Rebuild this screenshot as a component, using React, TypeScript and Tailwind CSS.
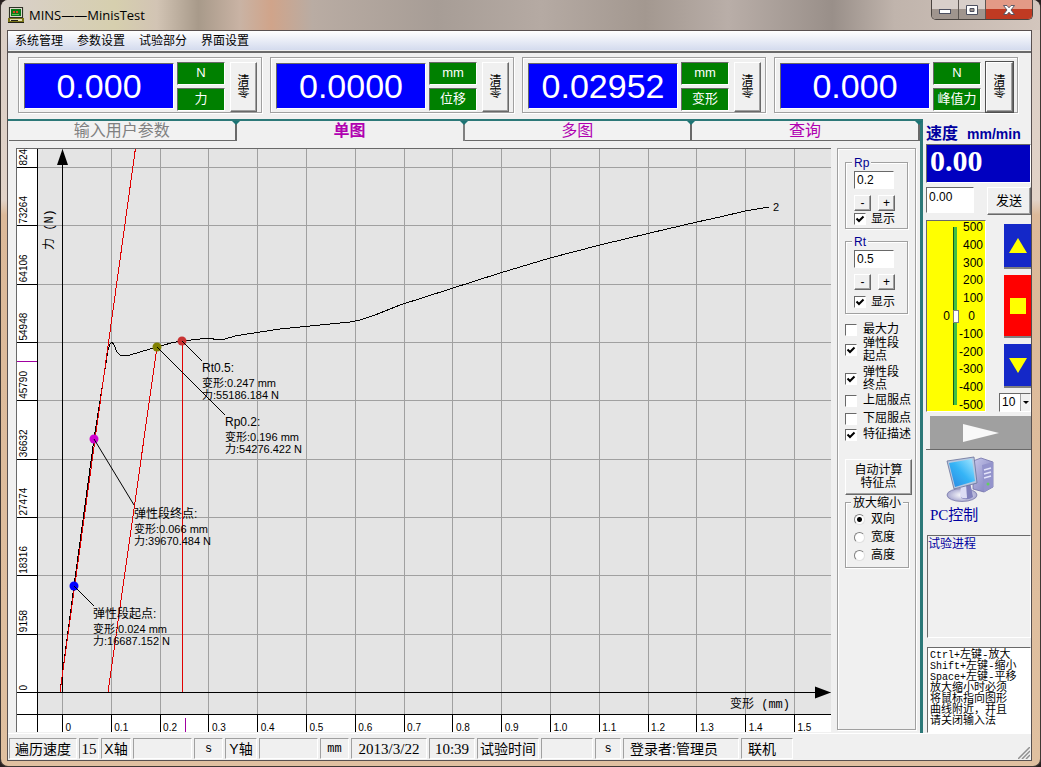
import React from "react";

const raised =
  "border border-t-white border-l-white border-r-[#696969] border-b-[#696969] bg-[#f0f0f0] shadow-[inset_-1px_-1px_0_#a0a0a0]";
const sunken = "border border-t-[#696969] border-l-[#696969] border-r-white border-b-white";

const menus = ["系统管理", "参数设置", "试验部分", "界面设置"];

const meters = [
  { value: "0.000", unit: "N", name: "力" },
  { value: "0.0000", unit: "mm", name: "位移" },
  { value: "0.02952", unit: "mm", name: "变形" },
  { value: "0.000", unit: "N", name: "峰值力" },
];

function TitleBar() {
  return (
    <header className="-mr-2 flex h-[30px] items-start justify-between bg-[linear-gradient(90deg,#d9d0cb_0%,#d6cfae_11%,#d2c4b4_15%,#a89a8a_19%,#c9b3a4_23%,#d0a48a_26%,#b9aca3_30%,#a79d96_42%,#b5aaa3_52%,#a39890_62%,#b9aea8_70%,#998f89_80%,#c0b4ac_86%,#d3c6bd_100%)] pr-[7px] pl-[7px]">
      <div className="flex items-center gap-[5px] pt-[7px]">
        <svg viewBox="0 0 16 16" className="h-4 w-4" aria-hidden="true" shapeRendering="crispEdges">
          <rect x="0" y="0" width="16" height="16" fill="#7a7418" />
          <rect x="0" y="0" width="16" height="11" fill="#c8c8b8" />
          <rect x="1" y="0" width="14" height="11" fill="#303028" />
          <rect x="2" y="1" width="12" height="9" fill="#d8d8c8" />
          <rect x="3" y="2" width="10" height="7" fill="#0a7818" />
          <rect x="5" y="4" width="2" height="2" fill="#e04020" />
          <rect x="8" y="4" width="2" height="2" fill="#e04020" />
          <rect x="4" y="7" width="7" height="1" fill="#60c050" />
          <rect x="2" y="12" width="12" height="2" fill="#e0dcb0" />
          <rect x="3" y="13" width="7" height="1" fill="#202018" />
          <rect x="0" y="15" width="16" height="1" fill="#202018" />
        </svg>
        <h1 className="font-['Open_Sans','Noto_Sans_CJK_SC',sans-serif] text-[13px] leading-4 text-black">MINS——MinisTest</h1>
      </div>
      <div className="flex h-5 overflow-hidden rounded-b-[5px] border border-t-0 border-[#4a4440]">
        <button aria-label="最小化" className="flex w-[27px] items-center justify-center border-r border-[#5d5652] bg-linear-to-b from-[#d8cfca] from-45% to-[#a0958e] to-50%">
          <svg viewBox="0 0 12 6" className="mt-1 h-[6px] w-3"><rect x="0.5" y="0.5" width="11" height="4" fill="#fff" stroke="#4d5060" /></svg>
        </button>
        <button aria-label="最大化" className="flex w-[27px] items-center justify-center border-r border-[#5d5652] bg-linear-to-b from-[#d8cfca] from-45% to-[#a0958e] to-50%">
          <svg viewBox="0 0 12 10" className="h-[10px] w-3"><path d="M.5 .5h11v9h-11z M4 3.5h4v3h-4z" fill="#fff" fillRule="evenodd" stroke="#4d5060" /></svg>
        </button>
        <button aria-label="关闭" className="flex w-[46px] items-center justify-center bg-linear-to-b from-[#e39a86] from-45% to-[#c03a22] to-50%">
          <svg viewBox="0 0 12 10" className="h-[10px] w-3"><path d="M.5 .5h3.5L6 2.8 8 .5h3.5L8 5l3.5 4.5H8L6 7.2 4 9.5H.5L4 5z" fill="#fff" stroke="#4d5060" strokeWidth=".9" /></svg>
        </button>
      </div>
    </header>
  );
}

function Meter({ value, unit, name, focused }: { value: string; unit: string; name: string; focused: boolean }) {
  return (
    <section className="flex h-14 w-[244px] gap-[3px] border border-[#a0a0a0] pt-[4px] pl-[5px] shadow-[inset_1px_1px_0_#fff,1px_1px_0_#fff]">
      <output className={`mt-[1px] flex h-[46px] w-[150px] items-center justify-center bg-[#0000ff] text-[34px] leading-none text-white ${sunken}`}>{value}</output>
      <div className="flex w-12 flex-col gap-[3px] text-center text-[13px] leading-[19px] text-white">
        <span className={`h-[23px] bg-[#008000] ${sunken}`}>{unit}</span>
        <span className={`h-[23px] bg-[#008000] ${sunken}`}>{name}</span>
      </div>
      <button className={`ml-[2px] flex h-[50px] w-[27px] flex-col items-center justify-center text-xs leading-3 ${raised} ${focused ? "outline outline-[#505050]" : ""}`}>
        <span className="w-3">清零</span>
      </button>
    </section>
  );
}

const tabs = ["输入用户参数", "单图", "多图", "查询"];

function TabStrip() {
  return (
    <nav className="flex h-5" role="tablist">
      {tabs.map((t, i) => {
        const active = i === 1;
        return (
          <button
            key={t}
            role="tab"
            aria-selected={active}
            className={`relative flex-1 text-base leading-[18px] ${i === 0 ? "text-[#808080]" : "text-[#b000b0]"} ${
              active ? "border-r-2 border-[#808080] font-bold" : "border-r-2 border-b border-[#696969] bg-[#f2f2f2]"
            }`}
          >
            {t}
            <svg viewBox="0 0 8 4" className="absolute top-0 -right-[5px] z-10 h-1 w-2" aria-hidden="true"><path d="M0 0h8L4 4z" fill="#1c7474" /></svg>
          </button>
        );
      })}
    </nav>
  );
}

const xOf = (v: number) => 46.5 + v * 488;
const yOf = (n: number) => 544.5 - n * 58.33;
const xTicks = Array.from({ length: 16 }, (_, i) => i / 10);
const yTicks = Array.from({ length: 10 }, (_, i) => i);

const curve =
  "44,544 58,438 78,291 92,202 94,196 96,194 98,197 101,204 104,207 109,208 114,207 124,204 141,199 155,195 166,193 184,191 194,190 201,192 209,191 219,188 244,184 264,181 294,178 334,174 344,172 359,167 384,157 434,141 484,125 534,110 584,97 634,85 681,74 704,69 729,63 753,59";

const marks = [
  { x: 166, y: 193, tx: 186, ty: 224, lx: 186, ly: 213, color: "#c83232", title: "Rt0.5:", d: "0.247", f: "55186.184" },
  { x: 141, y: 199, tx: 209, ty: 278, lx: 209, ly: 267, color: "#808000", title: "Rp0.2:", d: "0.196", f: "54276.422" },
  { x: 78, y: 291, tx: 118, ty: 370, lx: 118, ly: 357, color: "#d000d0", title: "弹性段终点:", d: "0.066", f: "39670.484" },
  { x: 58, y: 438, tx: 77, ty: 470, lx: 78, ly: 458, color: "#0000ff", title: "弹性段起点:", d: "0.024", f: "16687.152" },
];

function Chart() {
  return (
    <svg viewBox="0 0 815 584" role="img" aria-label="力-变形曲线" className="block h-auto w-full">
      <rect width="815" height="584" fill="#e4e4e4" />
      <rect width="21" height="584" fill="#fff" />
      <rect y="567" width="815" height="17" fill="#fff" />
      <g shapeRendering="crispEdges" fill="none">
        {xTicks.map((v) => (
          <g key={v}>
            <path d={`M${xOf(v)} 0V566`} stroke="#a0a0a0" />
            <path d={`M${xOf(v)} 566V584`} stroke="#000" />
          </g>
        ))}
        {yTicks.map((n) => (
          <g key={n}>
            <path d={`M22 ${yOf(n)}H815`} stroke="#a0a0a0" />
            <path d={`M0 ${yOf(n)}H22`} stroke="#000" />
          </g>
        ))}
        <path d="M21.5 0V584 M0 566.5H815 M46.5 6V544 M0 544.5H805" stroke="#000" />
        <path d="M1 213.5H21 M169.5 570V584" stroke="#a000a0" />
        <polyline points={curve} stroke="#000" />
        <path d="M44 544L119.5 0 M92 544L141 199 M166.5 193V544" stroke="#e00000" />
        <path d="M0 .5H815 M.5 0V584" stroke="#696969" />
      </g>
      <path d="M46.5 1L52 17H41z M815 544.5L799 538.5V550.5z" />
      <g className="text-[10px]">
        {xTicks.map((v) => (
          <text key={v} x={xOf(v) + 3} y="583">{v === 0 ? "0" : v.toFixed(1)}</text>
        ))}
        {yTicks.map((n) => (
          <text key={n} transform={`translate(11 ${yOf(n) - 2}) rotate(-90)`}>{n * 9158}</text>
        ))}
      </g>
      <g className="font-['Liberation_Mono','Noto_Sans_CJK_SC',monospace] text-xs">
        <text transform="translate(37 102) rotate(-90)">力 (N)</text>
        <text x="714" y="560">变形 (mm)</text>
      </g>
      <text x="757" y="63" className="text-[11px]">2</text>
      {marks.map((m) => (
        <g key={m.title}>
          <circle cx={m.x} cy={m.y} r="4.5" fill={m.color} />
          <path d={`M${m.x} ${m.y}L${m.lx} ${m.ly}`} stroke="#000" strokeWidth="1" />
          <text x={m.tx} y={m.ty} className="text-xs">{m.title}</text>
          <text x={m.tx} y={m.ty + 15} className="text-[11px]">变形:{m.d} mm</text>
          <text x={m.tx} y={m.ty + 27} className="text-[11px]">力:{m.f} N</text>
        </g>
      ))}
    </svg>
  );
}

const boxClass = `h-3 w-3 shrink-0 appearance-none bg-white ${sunken} checked:bg-[url("data:image/svg+xml,%3Csvg%20xmlns='http://www.w3.org/2000/svg'%20viewBox='0%200%2010%2010'%3E%3Cpath%20d='M1.500%204.500L4%207L8.500%202.500'%20fill='none'%20stroke='black'%20stroke-width='2'/%3E%3C/svg%3E")]`;

function OffsetGroup({ name, value, tall }: { name: string; value: string; tall: boolean }) {
  return (
    <fieldset className={`relative mx-[7px] border border-[#a0a0a0] pl-2 shadow-[inset_1px_1px_0_#fff,1px_1px_0_#fff] ${tall ? "h-[73px]" : "h-[67px]"}`}>
      <legend className="absolute -top-2 left-[6px] bg-[#f0f0f0] px-[2px] text-xs leading-4 text-[#000090]">{name}</legend>
      <input aria-label={name} defaultValue={value} className={`mt-2 block h-[18px] w-10 bg-white px-[2px] text-xs ${sunken}`} />
      <div className="mt-[6px] flex gap-[7px]">
        <button aria-label={`${name} 减小`} className={`h-4 w-[17px] text-xs leading-3 ${raised}`}>-</button>
        <button aria-label={`${name} 增大`} className={`h-4 w-[17px] text-xs leading-3 ${raised}`}>+</button>
      </div>
      <label className={`flex items-center gap-[5px] text-xs leading-4 ${tall ? "mt-1" : ""}`}>
        <input type="checkbox" defaultChecked className={boxClass} />
        显示
      </label>
    </fieldset>
  );
}

const options = [
  { label: "最大力", on: false, h: "h-[13px]" },
  { label: "弹性段起点", on: true, h: "h-[27px]" },
  { label: "弹性段终点", on: true, h: "h-[32px]" },
  { label: "上屈服点", on: false, h: "h-[11px]" },
  { label: "下屈服点", on: false, h: "h-[25px]" },
  { label: "特征描述", on: true, h: "h-[7px]" },
];

function OptionPanel() {
  return (
    <aside className="mb-[2px] w-[79px] shrink-0 border border-[#a0a0a0] pt-[13px] shadow-[inset_1px_1px_0_#fff,1px_1px_0_#fff]">
      <OffsetGroup name="Rp" value="0.2" tall={false} />
      <div className="h-3" />
      <OffsetGroup name="Rt" value="0.5" tall />
      <div className="mt-[9px] pl-[7px]">
        {options.map((o) => (
          <label key={o.label} className={`flex items-center gap-[6px] text-xs leading-[13px] ${o.h}`}>
            <input type="checkbox" defaultChecked={o.on} className={boxClass} />
            <span className={o.label.length === 5 ? "w-9" : "whitespace-nowrap"}>{o.label}</span>
          </label>
        ))}
      </div>
      <button className={`mt-[21px] ml-[7px] h-9 w-[67px] px-2 text-xs leading-[13px] ${raised}`}>自动计算特征点</button>
      <fieldset className="relative mt-[7px] ml-[7px] flex h-[66px] w-16 flex-col justify-end gap-[2px] border border-[#a0a0a0] pb-1 pl-2 shadow-[inset_1px_1px_0_#fff,1px_1px_0_#fff]">
        <legend className="absolute -top-2 left-[5px] bg-[#f0f0f0] px-[2px] text-xs leading-4 whitespace-nowrap">放大缩小</legend>
        {["双向", "宽度", "高度"].map((t, i) => (
          <label key={t} className="flex items-center gap-[6px] text-xs leading-4">
            <input type="radio" name="zoom" defaultChecked={i === 0} className="h-[11px] w-[11px] appearance-none rounded-full border border-[#808080] border-r-[#e0e0e0] border-b-[#e0e0e0] bg-white checked:bg-[radial-gradient(#000_0_2px,#fff_3px)]" />
            {t}
          </label>
        ))}
      </fieldset>
    </aside>
  );
}

const speeds = [500, 400, 300, 200, 100, 0, -100, -200, -300, -400, -500];

const hints = [
  ["Ctrl+", "左键-放大"],
  ["Shift+", "左键-缩小"],
  ["Space+", "左键-平移"],
  ["", "放大缩小时必须"],
  ["", "将鼠标指向图形"],
  ["", "曲线附近，并且"],
  ["", "请关闭输入法"],
];

function PcIcon() {
  return (
    <svg viewBox="0 0 48 46" className="h-[46px] w-12" aria-hidden="true">
      <defs>
        <linearGradient id="screen" x1="0" y1="1" x2="1" y2="0">
          <stop offset="0" stopColor="#2a86e0" />
          <stop offset=".5" stopColor="#35b4f6" />
          <stop offset="1" stopColor="#a8e8ff" />
        </linearGradient>
        <linearGradient id="tower" x1="0" y1="0" x2="1" y2="1">
          <stop offset="0" stopColor="#c8c8ec" />
          <stop offset="1" stopColor="#7878b8" />
        </linearGradient>
        <radialGradient id="base">
          <stop offset="0" stopColor="#ffffff" />
          <stop offset="1" stopColor="#a8a8d0" />
        </radialGradient>
      </defs>
      <path d="M27 5L35 2L47 6V31L38 36L27 33z" fill="url(#tower)" stroke="#7070a8" strokeWidth=".8" />
      <path d="M36 9L47 6V31L38 36z" fill="#9494cc" />
      <path d="M38 14l7-2M38 18l7-2M38 22l7-2" stroke="#e4e4fa" strokeWidth="1.4" />
      <circle cx="42" cy="28" r="1.5" fill="#60d060" />
      <ellipse cx="16" cy="39" rx="15" ry="6.5" fill="url(#base)" stroke="#7878a8" strokeWidth=".8" />
      <path d="M15 28L24 26L27 41Q22 45 15 42z" fill="#8080bc" />
      <path d="M15 29L20 28L21 42Q18 43 14 41z" fill="#dcdcf4" />
      <path d="M1 5L28 1L31 27L8 33z" fill="#b8c8e0" stroke="#687098" strokeWidth=".8" />
      <path d="M3 7L26 3L29 25L9 31z" fill="url(#screen)" />
    </svg>
  );
}

function ControlColumn() {
  return (
    <aside className="flex w-[108px] shrink-0 flex-col pt-[5px] pl-[3px]">
      <div className="flex h-5 items-center gap-[9px] font-bold whitespace-nowrap text-[#0000a0]">
        <span className="text-base leading-5">速度</span>
        <span className="text-sm leading-5">mm/min</span>
      </div>
      <output className={`flex h-[39px] items-start bg-[#0000c0] pl-[3px] font-['Liberation_Serif',serif] text-3xl leading-8 font-bold text-white ${sunken}`}>0.00</output>
      <div className="mt-1 flex justify-between">
        <input aria-label="速度" defaultValue="0.00" className={`h-[26px] w-12 bg-white px-[2px] pb-[6px] text-xs ${sunken}`} />
        <button className={`h-7 w-11 text-[13px] ${raised}`}>发送</button>
      </div>
      <div className="mt-[5px] flex justify-between">
        <div className={`flex h-[192px] w-[60px] justify-end bg-[#ffff00] pr-[2px] text-xs ${sunken}`}>
          <span className="mt-[87px] mr-[3px] leading-4">0</span>
          <input
            type="range"
            min={-500}
            max={500}
            defaultValue={0}
            aria-label="速度调节"
            className="mt-[6px] h-[178px] w-1 appearance-none border-l border-[#106020] bg-[#40c040] [direction:rtl] [writing-mode:vertical-lr] [&::-webkit-slider-thumb]:h-[13px] [&::-webkit-slider-thumb]:w-[6px] [&::-webkit-slider-thumb]:appearance-none [&::-webkit-slider-thumb]:border [&::-webkit-slider-thumb]:border-[#808080] [&::-webkit-slider-thumb]:bg-white"
          />
          <ul className="flex h-[190px] w-[26px] flex-col justify-between text-right leading-none">
            {speeds.map((s) => (
              <li key={s} className={s === 0 ? "pr-2" : ""}>{s}</li>
            ))}
          </ul>
        </div>
        <div className="flex w-8 flex-col items-end">
          <button aria-label="上升" className="mt-[4px] flex h-[45px] w-[27px] items-center justify-center border-b-2 border-[#808080] bg-[#1428c8]">
            <svg viewBox="0 0 18 15" className="h-[15px] w-[18px]"><path d="M9 0L18 15H0z" fill="#ffff00" /></svg>
          </button>
          <button aria-label="停止" className="mt-[6px] flex h-[63px] w-[27px] items-center justify-center border-b-2 border-[#808080] bg-[#ff0000]">
            <span className="h-4 w-4 bg-[#ffff00]" />
          </button>
          <button aria-label="下降" className="mt-[6px] flex h-[44px] w-[27px] items-center justify-center border-b-2 border-[#808080] bg-[#1428c8]">
            <svg viewBox="0 0 18 15" className="h-[15px] w-[18px]"><path d="M0 0H18L9 15z" fill="#ffff00" /></svg>
          </button>
          <div className={`relative mt-[5px] h-[19px] w-8 bg-white ${sunken}`}>
            <select aria-label="档位" className="block h-4 w-full appearance-none pl-[2px] text-xs leading-none">
              <option>10</option>
            </select>
            <span className="pointer-events-none absolute top-0 right-0 flex h-full w-[10px] items-center justify-center border-l border-[#a0a0a0] bg-[#f0f0f0]">
              <svg viewBox="0 0 6 3" className="h-[3px] w-[6px]"><path d="M0 0H6L3 3z" /></svg>
            </span>
          </div>
        </div>
      </div>
      <div className="mt-[4px] border-b border-[#696969] pl-1">
        <button aria-label="运行" className="flex h-[33px] w-full items-center justify-center bg-[#a0a0a0]">
          <svg viewBox="0 0 36 18" className="h-[18px] w-9"><path d="M0 0L36 9L0 18z" fill="#f8f8f8" /></svg>
        </button>
      </div>
      <button className="mt-[6px] flex h-[70px] flex-col items-start pl-1 font-['Liberation_Serif','Noto_Sans_CJK_SC',serif] text-[15px] leading-[26px] text-[#0000a0]">
        <span className="pl-4"><PcIcon /></span>
        PC控制
      </button>
      <section className={`mt-[9px] ml-[1px] h-[103px] text-xs leading-4 text-[#0000a0] ${sunken}`}>试验进程</section>
      <div className={`mt-[9px] ml-[1px] h-[86px] bg-white pt-[2px] pl-[2px] text-[11px] leading-[11px] ${sunken}`}>
        {hints.map(([keys, text]) => (
          <p key={keys + text} className="font-['Liberation_Mono','Noto_Sans_CJK_SC',monospace] whitespace-nowrap">
            {keys && <span className="text-[10px]">{keys}</span>}
            {text}
          </p>
        ))}
      </div>
    </aside>
  );
}

const serif = "font-['Liberation_Serif',serif] text-[15px]";
const mono = "font-['Liberation_Mono',monospace] text-xs";
const status = [
  { t: "遍历速度", c: "w-[68px] text-sm" },
  { t: "15", c: `w-5 ${serif}` },
  { t: "X轴", c: "w-[30px] text-sm" },
  { t: "", c: "w-[59px]" },
  { t: "s", c: `w-[29px] ${mono}` },
  { t: "Y轴", c: "w-8 text-sm" },
  { t: "", c: "w-[59px]" },
  { t: "mm", c: `w-[29px] ${mono}` },
  { t: "2013/3/22", c: `w-[76px] ${serif}` },
  { t: "10:39", c: `w-[46px] ${serif}` },
  { t: "试验时间", c: "w-[62px] text-sm" },
  { t: "", c: "w-[52px]" },
  { t: "s", c: `w-[26px] ${mono}` },
  { t: "登录者:管理员", c: "w-[116px] justify-start pl-[6px] text-sm" },
  { t: "联机", c: "w-[52px] justify-start pl-[6px] text-sm" },
];

export default function App() {
  return (
    <div className="min-h-screen bg-[#282020] font-['Liberation_Sans','Noto_Sans_CJK_SC',sans-serif] text-black">
      <div className="flex min-h-screen flex-col overflow-hidden rounded-lg border border-t-0 border-[#403834] bg-[linear-gradient(180deg,#d9cdc5_0,#e2d3c8_200px,#dcb999_215px,#e0c0a0_100%)] pr-[8px] pb-[5px]">
        <TitleBar />
        <div className="ml-[6px] flex flex-1 flex-col border border-[#585050] bg-[#f0f0f0]">
          <nav className="flex h-[19px] items-center gap-[14px] bg-linear-to-b from-white to-[#d4dbee] pl-[7px] text-xs">
            {menus.map((m) => (
              <button key={m} className="leading-4">{m}</button>
            ))}
          </nav>
          <div className="mt-[1px] flex flex-1 flex-col border-t-2 border-[#696969]">
            <div className="flex h-[66px] justify-between pt-[4px] pr-[13px] pl-[10px]">
              {meters.map((m, i) => (
                <Meter key={i} {...m} focused={i === 3} />
              ))}
            </div>
            <div className="flex">
              <main className="min-w-0 flex-1 border-t-2 border-r-[3px] border-t-[#2c7878] border-r-[#2c7878] pl-[1px]">
                <TabStrip />
                <div className="flex gap-[6px] pt-[7px] pr-1 pl-[7px]">
                  <div className="min-w-0 flex-1"><Chart /></div>
                  <OptionPanel />
                </div>
              </main>
              <ControlColumn />
            </div>
            <footer className="relative mt-auto flex h-[27px] gap-[2px] border-t border-white pt-1 pb-[1px] pl-[1px]">
              {status.map((s, i) => (
                <span key={i} className={`flex items-center border border-[#a0a0a0] border-r-white border-b-white leading-5 whitespace-nowrap ${s.c.includes("justify-start") ? "" : "justify-center"} ${s.c}`}>{s.t}</span>
              ))}
              <svg viewBox="0 0 12 12" className="absolute right-[1px] bottom-[1px] h-3 w-3" aria-hidden="true"><path d="M0 12L12 0M4 12L12 4M8 12L12 8" stroke="#909090" strokeWidth="1.5" /></svg>
            </footer>
          </div>
        </div>
      </div>
    </div>
  );
}
